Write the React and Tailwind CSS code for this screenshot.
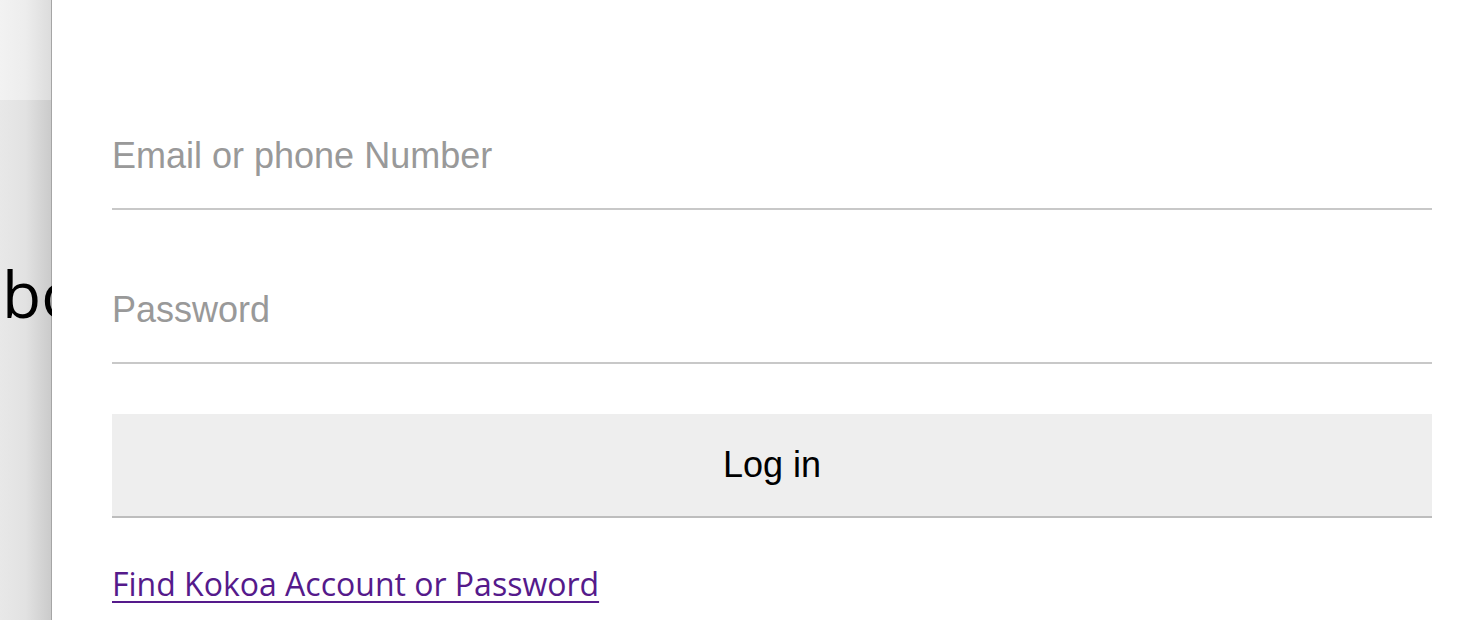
import React from "react";

export default function App() {
  return (
    <div className="flex h-[620px] w-[1476px] overflow-hidden bg-white">
      {/* background page peeking out on the left */}
      <div className="relative flex w-[52px] shrink-0 flex-col border-r border-[#a5a5a5]">
        <div className="h-[100px] bg-gradient-to-r from-[#f2f2f2] via-[#ededed] to-[#dcdcdc]" />
        <div className="flex-1 bg-gradient-to-r from-[#e8e8e8] via-[#e2e2e2] to-[#cbcbcb]" />
        <span className="absolute left-[2px] top-[262px] font-['Open_Sans',sans-serif] text-[64px] font-medium leading-none text-black">
          bo
        </span>
      </div>

      {/* login form */}
      <div className="z-10 flex flex-1 flex-col bg-white pl-[60px] pr-[44px] pt-[104px] font-['Liberation_Sans',Arial,sans-serif]">
        <input
          type="text"
          placeholder="Email or phone Number"
          className="h-[106px] border-b-2 border-[#c8c8c8] bg-transparent text-[36px] text-black outline-none placeholder:text-[#999]"
        />
        <input
          type="password"
          placeholder="Password"
          className="mt-[48px] h-[106px] border-b-2 border-[#c8c8c8] bg-transparent text-[36px] text-black outline-none placeholder:text-[#999]"
        />
        <button className="mt-[50px] h-[104px] border-b-2 border-[#bdbdbd] bg-[#eeeeee] text-[36px] text-black">
          Log in
        </button>
        <a
          href="#"
          className="mt-[46px] self-start font-['Open_Sans',sans-serif] text-[32px] leading-[40px] text-[#551a8b] underline decoration-2 underline-offset-[5px]"
        >
          Find Kokoa Account or Password
        </a>
      </div>
    </div>
  );
}
